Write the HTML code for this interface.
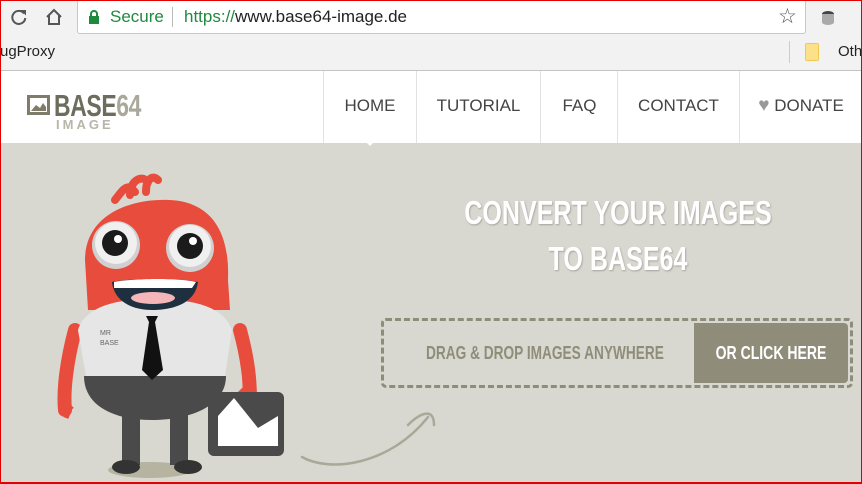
<!DOCTYPE html>
<html><head><meta charset="utf-8"><style>
*{margin:0;padding:0;box-sizing:border-box}
html,body{width:862px;height:484px;overflow:hidden;background:#fff;font-family:"Liberation Sans",sans-serif}
#frame{position:absolute;left:0;top:0;width:862px;height:484px;border:1px solid #e00000;border-bottom:2px solid #e00000;z-index:10;pointer-events:none}
#top{position:absolute;left:0;top:0;width:862px;height:37px;background:#f2f2f2}
#addr{position:absolute;left:77px;top:1px;width:729px;height:33px;background:#fff;border:1px solid #c8c8c8;border-top:none;border-radius:0 0 3px 3px}
#bm{position:absolute;left:0;top:37px;width:862px;height:34px;background:#f2f2f2;border-bottom:1px solid #c4c4c4}
.n{position:absolute;font-size:17px;color:#444;top:71px;height:72px;line-height:70px;text-align:center;border-left:1px solid #e2e2e2}
#hero{position:absolute;left:0;top:143px;width:862px;height:341px;background:#d9d8d0}
.cond{font-weight:bold;white-space:nowrap}
</style></head><body>
<div id="top"></div>
<div id="addr"></div>
<svg style="position:absolute;left:9px;top:7px" width="20" height="20" viewBox="0 0 20 20"><path d="M15 6.5A6.5 6.5 0 1 0 16.3 11" fill="none" stroke="#555" stroke-width="2"/><path d="M11.5 3h5.5v5.5z" fill="#555"/></svg>
<svg style="position:absolute;left:44px;top:7px" width="20" height="20" viewBox="0 0 20 20"><path d="M3 10L10 3l7 7M5 8.5V17h10V8.5" fill="none" stroke="#555" stroke-width="2"/></svg>
<svg style="position:absolute;left:88px;top:10px" width="12" height="14" viewBox="0 0 12 14"><rect x="1" y="6" width="10" height="8" fill="#1e8a3e"/><path d="M3 6V4a3 3 0 0 1 6 0v2" fill="none" stroke="#1e8a3e" stroke-width="2"/></svg>
<div style="position:absolute;left:110px;top:7px;font-size:17px;color:#1e8a3e">Secure</div>
<div style="position:absolute;left:172px;top:7px;width:1px;height:20px;background:#bbb"></div>
<div style="position:absolute;left:184px;top:7px;font-size:17px;color:#222"><span style="color:#1e8a3e">https://</span>www.base64-image.de</div>
<div style="position:absolute;left:778px;top:4px;font-size:21px;color:#555">☆</div>
<svg style="position:absolute;left:820px;top:10px" width="16" height="16" viewBox="0 0 16 16"><ellipse cx="8" cy="4" rx="6" ry="3" fill="#444"/><path d="M2 4v8a6 3 0 0 0 12 0V4" fill="#aaa"/></svg>
<div id="bm"></div>
<div style="position:absolute;left:0;top:43px;font-size:15px;color:#222">ugProxy</div>
<div style="position:absolute;left:789px;top:41px;width:1px;height:22px;background:#ccc"></div>
<div style="position:absolute;left:805px;top:43px;width:14px;height:18px;background:#fde08a;border:1px solid #f0c850;border-radius:2px"></div>
<div style="position:absolute;left:838px;top:43px;font-size:15px;color:#222">Oth</div>
<svg style="position:absolute;left:27px;top:95px" width="23" height="20" viewBox="0 0 23 20"><rect x="1.5" y="1.5" width="20" height="17" fill="none" stroke="#7f7c6b" stroke-width="3"/><path d="M4 16l5-6 4 3 3-5 3 4v4z" fill="#7f7c6b"/></svg>
<div class="cond" style="position:absolute;left:54px;top:88px;font-size:31px;color:#6e6c5c;letter-spacing:-0.5px;transform:scaleX(0.74);transform-origin:left">BASE<span style="color:#aaa89a">64</span></div>
<div style="position:absolute;left:56px;top:117px;font-size:13px;font-weight:bold;color:#b8b6a8;letter-spacing:3px">IMAGE</div>
<div class="n" style="left:323px;width:93px">HOME</div>
<div class="n" style="left:416px;width:124px">TUTORIAL</div>
<div class="n" style="left:540px;width:78px">FAQ</div>
<div class="n" style="left:617px;width:122px">CONTACT</div>
<div class="n" style="left:739px;width:123px"><span style="color:#999;font-size:19px">♥</span> DONATE</div>
<div id="hero"></div>
<div style="position:absolute;left:361px;top:137px;width:0;height:0;border-left:9px solid transparent;border-right:9px solid transparent;border-top:9px solid #fff"></div>
<div class="cond" style="position:absolute;left:383px;top:190px;width:470px;text-align:center;color:#fff;font-size:33px;line-height:46px;text-shadow:1px 1px 2px rgba(0,0,0,.25);transform:scaleX(0.76)">CONVERT YOUR IMAGES<br>TO BASE64</div>
<div style="position:absolute;left:381px;top:318px;width:472px;height:70px;border:3px dashed #8f8d7a;border-radius:5px"></div>
<div class="cond" style="position:absolute;left:390px;top:343px;width:300px;text-align:center;font-size:18px;color:#8f8d7a;transform:scaleX(0.76)">DRAG &amp; DROP IMAGES ANYWHERE</div>
<div style="position:absolute;left:694px;top:323px;width:154px;height:60px;background:#8f8d7a;border-radius:0 4px 4px 0"></div>
<div class="cond" style="position:absolute;left:684px;top:323px;width:174px;color:#fff;font-size:18px;line-height:60px;text-align:center;transform:scaleX(0.78)">OR CLICK HERE</div>
<svg style="position:absolute;left:300px;top:405px" width="140" height="65" viewBox="0 0 140 65"><path d="M2 52C30 68 90 60 128 12M108 20C120 8 134 2 134 20" fill="none" stroke="#aaa898" stroke-width="2.5" stroke-linecap="round"/></svg>
<svg style="position:absolute;left:40px;top:170px" width="260" height="314" viewBox="0 0 260 314">
<ellipse cx="110" cy="300" rx="42" ry="8" fill="#b6b4a0"/>
<path d="M75 30c8-10 12-18 20-8M90 25c0-12 8-18 14-16M106 22c0-12 6-18 12-12" stroke="#e84c3d" stroke-width="8" fill="none" stroke-linecap="round"/>
<path d="M45 90C45 45 90 28 130 30C170 32 190 60 188 110L190 140 L48 140Z" fill="#e84c3d"/>
<path d="M35 160c-8 30-12 60-10 80 M200 160c8 30 10 50 10 70" stroke="#e84c3d" stroke-width="14" fill="none" stroke-linecap="round"/>
<path d="M32 236l-8 8M30 238l-4 10" stroke="#e84c3d" stroke-width="5"/>
<path d="M38 160C44 140 70 128 112 130C160 128 185 140 192 160L185 206L46 206Z" fill="#e6e6e6"/>
<path d="M44 206L186 206C186 236 150 250 112 250C74 250 44 236 44 206Z" fill="#4a4a4a"/>
<rect x="82" y="240" width="18" height="55" fill="#4a4a4a"/><rect x="130" y="240" width="18" height="55" fill="#4a4a4a"/>
<ellipse cx="86" cy="297" rx="14" ry="7" fill="#333"/><ellipse cx="148" cy="297" rx="14" ry="7" fill="#333"/>
<path d="M72 112C90 108 140 108 158 112C155 135 130 140 112 140C90 140 74 130 72 112Z" fill="#1e3040"/>
<path d="M74 112C95 108 140 108 156 112L152 118L74 118Z" fill="#fff"/>
<ellipse cx="113" cy="128" rx="22" ry="6" fill="#f4b6b8"/>
<circle cx="76" cy="75" r="24" fill="#d0d0d0"/><circle cx="76" cy="73" r="21" fill="#f0f0f0"/><circle cx="75" cy="73" r="13" fill="#1b1b1b"/><circle cx="78" cy="69" r="4" fill="#fff"/>
<circle cx="150" cy="78" r="24" fill="#d0d0d0"/><circle cx="150" cy="76" r="21" fill="#f0f0f0"/><circle cx="150" cy="76" r="13" fill="#1b1b1b"/><circle cx="153" cy="71" r="4" fill="#fff"/>
<path d="M106 146h12l-3 6 8 48-11 10-10-10 7-48z" fill="#111"/>
<text x="60" y="165" font-size="7" fill="#666" font-family="Liberation Sans">MR</text><text x="60" y="175" font-size="7" fill="#666" font-family="Liberation Sans">BASE</text>
<path d="M200 220l8 8" stroke="#e84c3d" stroke-width="10"/>
<rect x="168" y="222" width="76" height="64" rx="6" fill="#4a4a4a"/>
<path d="M178 276V246l16-18 24 30 20-12v30z" fill="#fff"/>
</svg>
<div id="frame"></div>
</body></html>
